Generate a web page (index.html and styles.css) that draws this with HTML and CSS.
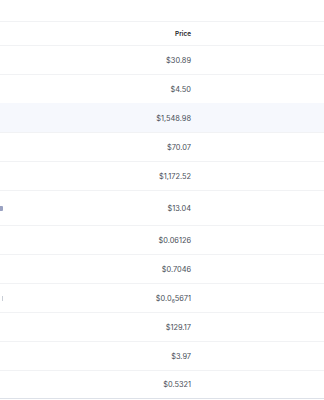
FILE: index.html
```html
<!DOCTYPE html>
<html>
<head>
<meta charset="utf-8">
<link rel="stylesheet" href="styles.css">
</head>
<body>
<div class="viewport">
  <div class="table">
    <div class="row head">
      <div class="c-name"></div>
      <div class="c-price">Price</div>
      <div class="c-rest"></div>
    </div>
    <div class="row"><div class="c-name"></div><div class="c-price">$30.89</div><div class="c-rest"></div></div>
    <div class="row"><div class="c-name"></div><div class="c-price">$4.50</div><div class="c-rest"></div></div>
    <div class="row hover"><div class="c-name"></div><div class="c-price">$1,548.98</div><div class="c-rest"></div></div>
    <div class="row"><div class="c-name"></div><div class="c-price">$70.07</div><div class="c-rest"></div></div>
    <div class="row"><div class="c-name"></div><div class="c-price">$1,172.52</div><div class="c-rest"></div></div>
    <div class="row tall"><div class="c-name"><span class="frag tag"></span></div><div class="c-price">$13.04</div><div class="c-rest"></div></div>
    <div class="row"><div class="c-name"></div><div class="c-price">$0.06126</div><div class="c-rest"></div></div>
    <div class="row"><div class="c-name"></div><div class="c-price">$0.7046</div><div class="c-rest"></div></div>
    <div class="row"><div class="c-name"><span class="frag dim"></span></div><div class="c-price">$0.0<sub>6</sub>5671</div><div class="c-rest"></div></div>
    <div class="row"><div class="c-name"></div><div class="c-price">$129.17</div><div class="c-rest"></div></div>
    <div class="row"><div class="c-name"></div><div class="c-price">$3.97</div><div class="c-rest"></div></div>
    <div class="row last"><div class="c-name"></div><div class="c-price">$0.5321</div><div class="c-rest"></div></div>
  </div>
</div>
</body>
</html>
```
FILE: styles.css
```css
html, body {
  margin: 0;
  padding: 0;
  background: #ffffff;
}
body {
  font-family: Inter, "Noto Sans", sans-serif;
  overflow: hidden;
}
.viewport {
  width: 324px;
  height: 400px;
  overflow: hidden;
  padding-top: 21px;
  box-sizing: border-box;
}
.table {
  display: flex;
  flex-direction: column;
  width: 700px;
  margin-left: -137px;
}
.row {
  display: flex;
  align-items: center;
  height: 29px;
  border-top: 1px solid #f1f2f4;
  box-sizing: border-box;
  font-size: 7.4px;
  color: #474d57;
}
.row.head {
  height: 24px;
  font-size: 6.4px;
  font-weight: 600;
  color: #1e2329;
}
.row.hover {
  background: #f6f8fd;
  border-top-color: #f6f8fd;
}
.row.tall {
  height: 35px;
}
.row.last {
  height: 29px;
  border-bottom: 1px solid #dde1e8;
}
.c-name {
  flex: 0 0 140px;
  display: flex;
  justify-content: flex-end;
  align-items: center;
}
.frag {
  display: block;
  height: 5px;
}
.frag.tag {
  width: 3px;
  background: #9aa2c2;
  border-radius: 0 1px 1px 0;
}
.frag.dim {
  width: 1px;
  background: #c9ced6;
}
.c-price {
  flex: 0 0 188px;
  text-align: right;
  white-space: nowrap;
}
.c-price sub {
  font-size: 5px;
  vertical-align: -1.5px;
  line-height: 0;
}
.c-rest {
  flex: 1 1 auto;
}
```
